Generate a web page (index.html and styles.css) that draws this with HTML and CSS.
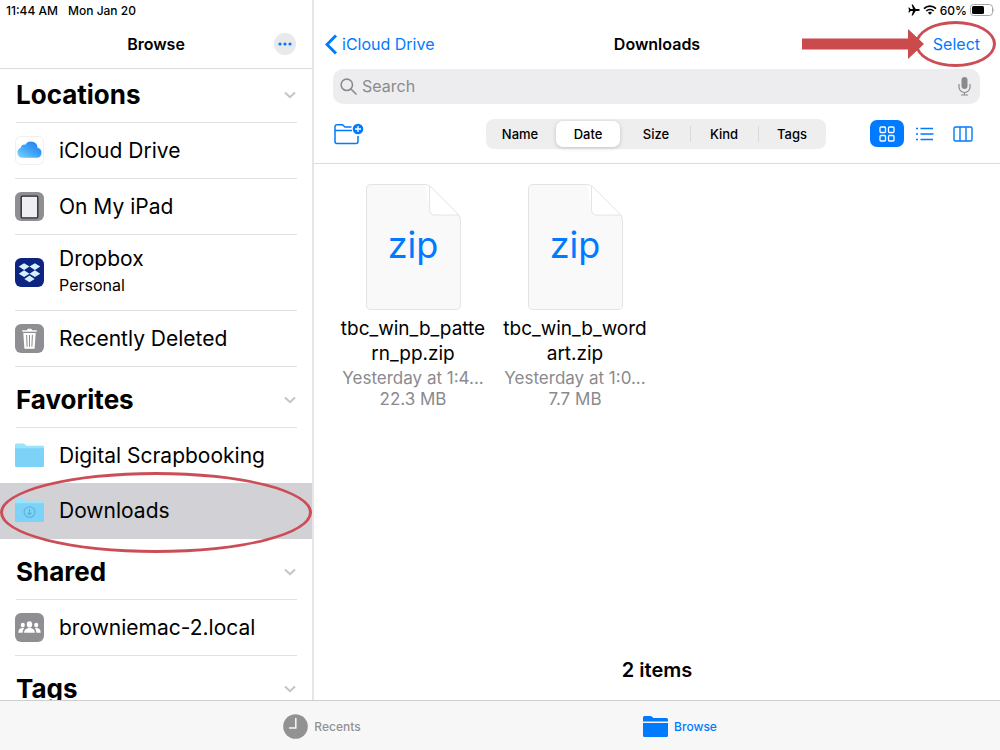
FILE: index.html
```html
<!DOCTYPE html>
<html lang="en">
    <head>
        <meta charset="utf-8">
        <title>Files</title>
        <link rel="stylesheet" href="styles.css">
    </head>

    <body>
        <div class="panes">
            <aside class="sidebar">
                <div class="status">
                    <span>11:44 AM</span>
                    <span>Mon Jan 20</span>
                </div>
                <header class="navbar sidebar-nav">
                    <h1 class="title">Browse</h1>
                    <button class="more" aria-label="More">
                        <svg width="16" height="4" viewBox="0 0 16 4"><circle cx="3" cy="2" r="1.6"/><circle cx="8" cy="2" r="1.6"/><circle cx="13" cy="2" r="1.6"/></svg>
                    </button>
                </header>

                <div class="lists">
                    <section>
                        <h2 class="heading">Locations <button class="fold" aria-label="Collapse Locations"><svg width="14" height="8" viewBox="0 0 14 8"><path d="M2 1.5l5 4.7 5-4.7"/></svg></button></h2>
                        <ul>
                            <li><a class="row" href="#">
                                <svg class="icon" viewBox="0 0 28 28">
                                    <defs><linearGradient id="cloud" x1="0" y1="1" x2="1" y2="0"><stop offset="0" stop-color="#7fd6fd"/><stop offset=".5" stop-color="#3ea2f7"/><stop offset="1" stop-color="#1c78ee"/></linearGradient></defs>
                                    <rect x=".5" y=".5" width="27" height="27" rx="5" fill="#fff" stroke="#f0f0f0"/>
                                    <path fill="url(#cloud)" d="M7 21a5 5 0 0 1-1.5-9.6 4 4 0 0 1 4.5-3 6.4 6.4 0 0 1 11.8 3A4.9 4.9 0 0 1 21.500 21z"/>
                                </svg>
                                <span>iCloud Drive</span></a></li>
                            <li><a class="row" href="#">
                                <svg class="icon" viewBox="0 0 28 28">
                                    <rect width="28" height="28" rx="6" fill="#8e8e93"/>
                                    <rect x="6" y="4" width="16" height="21" rx="1" fill="#eeeef3" stroke="#2b2b2e" stroke-width="1.3"/>
                                </svg>
                                <span>On My iPad</span></a></li>
                            <li><a class="row tall" href="#">
                                <svg class="icon" viewBox="0 0 28 28">
                                    <rect width="28" height="28" rx="6" fill="#0d2481"/>
                                    <path fill="#d3f2fd" d="M8.8 5l5.2 3.3-5.2 3.3-5.2-3.3zM19.2 5l5.2 3.3-5.2 3.3L14 8.3zM8.8 11.8l5.2 3.3-5.2 3.3-5.2-3.3zM19.2 11.8l5.2 3.3-5.2 3.3-5.2-3.3zM14 17l5 3.2-5 3.3-5-3.3z"/>
                                </svg>
                                <span>Dropbox<small>Personal</small></span></a></li>
                            <li><a class="row" href="#">
                                <svg class="icon" viewBox="0 0 28 28">
                                    <rect width="28" height="28" rx="6" fill="#8e8e93"/>
                                    <path fill="#fff" d="M7 6h4.5l.8-1.5h3.4l.8 1.5H21v1.6H7zM8 8.6h12L18.9 24H9.1z"/>
                                    <path fill="none" stroke="#8e8e93" d="M11.2 10.5l.5 11.5M14 10.5V22M16.8 10.5l-.5 11.5"/>
                                </svg>
                                <span>Recently Deleted</span></a></li>
                        </ul>
                    </section>
                    <section>
                        <h2 class="heading">Favorites <button class="fold" aria-label="Collapse Favorites"><svg width="14" height="8" viewBox="0 0 14 8"><path d="M2 1.5l5 4.7 5-4.7"/></svg></button></h2>
                        <ul>
                            <li><a class="row" href="#">
                                <svg class="icon" viewBox="0 0 28 28">
                                    <path fill="#9be2fb" d="M0 3.5q0-1 1-1h7.5l2.5 2h16q1 0 1 1V8H0z"/>
                                    <path fill="#7dd2f7" d="M0 7h28v17q0 1-1 1H1q-1 0-1-1z"/>
                                </svg>
                                <span>Digital Scrapbooking</span></a></li>
                            <li class="selected"><a class="row" href="#">
                                <svg class="icon" viewBox="0 0 28 28">
                                    <path fill="#9be2fb" d="M0 3.5q0-1 1-1h7.5l2.5 2h16q1 0 1 1V8H0z"/>
                                    <path fill="#7dd2f7" d="M0 7h28v17q0 1-1 1H1q-1 0-1-1z"/>
                                    <g fill="none" stroke="#56b0da"><circle cx="14" cy="15.5" r="5.2"/><path d="M14 12.5v5.5M12 16l2 2 2-2"/></g>
                                </svg>
                                <span>Downloads</span></a>
                                <i class="ring ring-row"></i></li>
                        </ul>
                    </section>
                    <section>
                        <h2 class="heading">Shared <button class="fold" aria-label="Collapse Shared"><svg width="14" height="8" viewBox="0 0 14 8"><path d="M2 1.5l5 4.7 5-4.7"/></svg></button></h2>
                        <ul>
                            <li><a class="row" href="#">
                                <svg class="icon" viewBox="0 0 28 28">
                                    <rect width="28" height="28" rx="6" fill="#8e8e93"/>
                                    <g fill="#fff"><ellipse cx="14" cy="11" rx="2.6" ry="3"/><path d="M8.8 19c0-6 10.4-6 10.4 0z"/>
                                    <ellipse cx="7.5" cy="11.7" rx="2" ry="2.4"/><path d="M3.2 19c0-4 2.8-5 5.6-4.2-1 1.2-1.300 2.500-1.4 4.2z"/>
                                    <ellipse cx="20.5" cy="11.7" rx="2" ry="2.4"/><path d="M24.8 19c0-4-2.8-5-5.6-4.2 1 1.2 1.300 2.500 1.4 4.2z"/></g>
                                </svg>
                                <span>browniemac-2.local</span></a></li>
                        </ul>
                    </section>
                    <section>
                        <h2 class="heading">Tags <button class="fold" aria-label="Collapse Tags"><svg width="14" height="8" viewBox="0 0 14 8"><path d="M2 1.5l5 4.7 5-4.7"/></svg></button></h2>
                    </section>
                </div>
            </aside>

            <main class="main">
                <div class="status status-right">
                    <svg width="12" height="12" viewBox="0 0 12 12"><path d="M11.8 6c0 .6-.8.9-1.6.9H7.7L4.8 11.5H3.6L5 6.9H2.5L1.3 8.4H.4L1 6 .4 3.6h.9l1.2 1.5H5L3.6.5h1.2l2.9 4.6h2.5c.8 0 1.6.3 1.6.9z"/></svg>
                    <svg width="14" height="10" viewBox="0 0 14 10"><g fill="none" stroke="#000" stroke-width="1.7"><path d="M1 3.7a8.500 8.500 0 0 1 12 0M3.3 6a5.300 5.300 0 0 1 7.4 0"/></g><path d="M4.9 7.7a3 3 0 0 1 4.2 0L7 9.8z"/></svg>
                    <span>60%</span>
                    <svg width="25" height="12" viewBox="0 0 25 12"><rect x=".5" y=".5" width="22" height="11" rx="3" fill="#fff" stroke="#a5a5a5"/><rect x="2" y="2" width="12" height="8" rx="1.5"/><path fill="#a5a5a5" d="M23.5 4q1.5 2 0 4z"/></svg>
                </div>
                <header class="navbar">
                    <a class="back" href="#"><svg width="13" height="21" viewBox="0 0 13 21"><path d="M11 1.5l-9 9 9 9"/></svg>iCloud Drive</a>
                    <h1 class="title">Downloads</h1>
                    <div class="select">
                        <i class="ring ring-select"></i>
                        <svg class="arrow" width="122" height="30" viewBox="0 0 122 30"><path d="M0 9.5h106V0l16 15-16 15V20.5H0z"/></svg>
                        <button class="link">Select</button>
                    </div>
                </header>

                <div class="search">
                    <svg width="17" height="17" viewBox="0 0 17 17"><g fill="none" stroke="#8a8a8e" stroke-width="1.6"><circle cx="6.8" cy="6.8" r="5.7"/><path d="M11 11l5 5" stroke-linecap="round"/></g></svg>
                    <input type="search" placeholder="Search" aria-label="Search">
                    <button class="plain" aria-label="Dictate"><svg width="13" height="19" viewBox="0 0 13 19"><rect x="3.5" y="0" width="6" height="12" rx="3" fill="#8a8a8e"/><path fill="none" stroke="#8a8a8e" stroke-width="1.2" d="M1 7v3a5.5 5.5 0 0 0 11 0V7M6.5 15.5V18M3 18h7"/></svg></button>
                </div>

                <div class="toolbar">
                    <button class="plain" aria-label="New Folder">
                        <svg width="30" height="22" viewBox="0 0 30 22">
                            <path fill="none" stroke="#007aff" stroke-width="1.5" d="M17.5 4H11L8.5 1.7H3.2Q1 1.7 1 4v14.5q0 2 2 2h19q2 0 2-2V13M1 7.5h17"/>
                            <circle cx="24" cy="6" r="5.3" fill="#007aff"/>
                            <path stroke="#fff" stroke-width="1.3" d="M24 3v6M21 6h6"/>
                        </svg>
                    </button>
                    <div class="segments">
                        <button>Name</button>
                        <button class="on">Date</button>
                        <button>Size</button>
                        <button class="divided">Kind</button>
                        <button class="divided">Tags</button>
                    </div>
                    <div class="views">
                        <button class="plain on" aria-label="Icons"><svg width="16" height="16" viewBox="0 0 16 16"><g fill="none" stroke="#fff" stroke-width="1.3"><rect x="1" y="1" width="5.5" height="5.5" rx="1"/><rect x="9.5" y="1" width="5.5" height="5.5" rx="1"/><rect x="1" y="9.5" width="5.5" height="5.5" rx="1"/><rect x="9.5" y="9.5" width="5.5" height="5.5" rx="1"/></g></svg></button>
                        <button class="plain" aria-label="List"><svg width="18" height="14" viewBox="0 0 18 14"><path fill="none" stroke="#007aff" stroke-width="1.5" d="M0 1.5h2M4.5 1.5H17M0 7h2M4.5 7H17.5M0 12.5h2M4.5 12.5H17"/></svg></button>
                        <button class="plain" aria-label="Columns"><svg width="20" height="16" viewBox="0 0 20 16"><path fill="none" stroke="#007aff" stroke-width="1.4" d="M7 1v14M13 1v14M2.5 1h15Q19 1 19 2.5v11q0 1.5-1.5 1.5h-15Q1 15 1 13.5v-11Q1 1 2.5 1z"/></svg></button>
                    </div>
                </div>

                <div class="files">
                    <div class="file">
                        <div class="doc">
                            <svg width="95" height="126" viewBox="0 0 95 126"><path fill="#f9f9f9" d="M5 .5h58L94.5 32v89q0 4.5-4.5 4.5H5Q.5 125.5.5 121V5Q.5.5 5 .5z"/><path fill="#fff" d="M59 .5h5L94.5 31H69q-5.5 0-5.5-5.5z"/><path fill="none" stroke="#e4e4e5" d="M94.5 37v84q0 4.5-4.5 4.5H5Q.5 125.5.5 121V5Q.5.5 5 .5h54q3.5 0 6 2.5L91.5 29.5q3 3 3 7.5M63.5 2v23.5q0 5.5 5.5 5.5h23.5"/></svg>
                            <span class="ext">zip</span>
                        </div>
                        <div class="name">tbc_win_b_patte<br>rn_pp.zip</div>
                        <div class="meta">Yesterday at 1:4...<br>22.3 MB</div>
                    </div>
                    <div class="file">
                        <div class="doc">
                            <svg width="95" height="126" viewBox="0 0 95 126"><path fill="#f9f9f9" d="M5 .5h58L94.5 32v89q0 4.5-4.5 4.5H5Q.5 125.5.5 121V5Q.5.5 5 .5z"/><path fill="#fff" d="M59 .5h5L94.5 31H69q-5.5 0-5.5-5.5z"/><path fill="none" stroke="#e4e4e5" d="M94.5 37v84q0 4.5-4.5 4.5H5Q.5 125.5.5 121V5Q.5.5 5 .5h54q3.5 0 6 2.5L91.5 29.5q3 3 3 7.5M63.5 2v23.5q0 5.5 5.5 5.5h23.5"/></svg>
                            <span class="ext">zip</span>
                        </div>
                        <div class="name">tbc_win_b_word<br>art.zip</div>
                        <div class="meta">Yesterday at 1:0...<br>7.7 MB</div>
                    </div>
                </div>
                <p class="count">2 items</p>
            </main>
        </div>

        <nav class="tabbar">
            <a class="tab" href="#"><svg width="25" height="25" viewBox="0 0 25 25"><circle cx="12.5" cy="12.5" r="12.3" fill="#929292"/><path fill="none" stroke="#f7f7f7" stroke-width="1.5" d="M12.8 4v10H6"/></svg>Recents</a>
            <a class="tab active" href="#"><svg width="25" height="21" viewBox="0 0 25 21"><path fill="#007aff" d="M0 5.5V1.5Q0 0 1.5 0h6q1 0 1.5.7L10.500 2h13Q25 2 25 3.5v2zM0 7h25v12.500q0 1.500-1.500 1.500h-22Q0 21 0 19.500z"/></svg>Browse</a>
        </nav>
    </body>
</html>
```

FILE: styles.css
```css
* {
    box-sizing: border-box;
}

body {
    margin: 0;
    height: 100vh;
    display: flex;
    flex-direction: column;
    background: #fff;
    color: #000;
    font-family: Inter, "Liberation Sans", sans-serif;
    font-size: 16px;
}

h1, h2, p, ul {
    margin: 0;
    padding: 0;
}

ul {
    list-style: none;
}

a {
    color: inherit;
    text-decoration: none;
}

button {
    font: inherit;
    color: inherit;
    border: none;
    background: none;
    padding: 0;
    cursor: pointer;
}

svg {
    display: block;
    flex: none;
}

.panes {
    flex: 1;
    min-height: 0;
    display: flex;
}

.status {
    height: 20px;
    flex: none;
    display: flex;
    align-items: center;
    gap: 10px;
    padding: 0 6px;
    font-size: 12px;
    font-weight: 500;
}

.status-right {
    justify-content: flex-end;
    gap: 3px;
    padding-right: 5px;
}

.navbar {
    height: 48px;
    flex: none;
    display: grid;
    grid-template-columns: 1fr auto 1fr;
    align-items: center;
    padding: 0 20px;
}

.title {
    font-size: 16px;
    font-weight: 600;
}

/* sidebar */

.sidebar {
    width: 314px;
    flex: none;
    display: flex;
    flex-direction: column;
    border-right: 2px solid #e5e5e7;
}

.sidebar-nav {
    height: 49px;
    padding: 0 16px;
    border-bottom: 1px solid #dcdcdd;
}

.sidebar-nav .title {
    grid-column: 2;
}

.more {
    justify-self: end;
    width: 22px;
    height: 22px;
    border-radius: 50%;
    background: #e9e9eb;
    display: grid;
    place-items: center;
}

.more svg {
    fill: #007aff;
}

.lists {
    flex: 1;
    min-height: 0;
    overflow: hidden;
}

.heading {
    display: flex;
    align-items: center;
    justify-content: space-between;
    height: 54px;
    margin: 0 15px 0 16px;
    padding-bottom: 2px;
    border-bottom: 1px solid #e2e2e4;
    font-size: 26px;
    font-weight: 700;
}

section + section .heading {
    margin-top: 7px;
}

.fold svg {
    fill: none;
    stroke: #c4c4c7;
    stroke-width: 2;
}

.row {
    display: flex;
    align-items: center;
    gap: 15px;
    height: 56px;
    margin: 0 15px;
    border-bottom: 1px solid #e2e2e4;
    font-size: 21px;
}

.row.tall {
    height: 76px;
}

.row small {
    display: block;
    font-size: 16px;
    line-height: 28px;
}

.icon {
    width: 29px;
    height: 29px;
}

.selected {
    position: relative;
    margin-top: -1px;
    background: #d1d1d6;
}

.selected .row {
    border-color: transparent;
}

/* red markup */

.ring {
    position: absolute;
    border: 3px solid #cb4e57;
    border-radius: 50%;
    pointer-events: none;
}

.ring-row {
    inset: -11px 0 -14px;
}

.ring-select {
    inset: -13px -16px -13px -18px;
}

.arrow {
    position: absolute;
    right: 56px;
    fill: #cb4a4c;
}

/* file browser */

.main {
    flex: 1;
    min-width: 0;
    display: flex;
    flex-direction: column;
}

.back {
    display: flex;
    align-items: center;
    gap: 4px;
    margin-left: -9px;
    color: #007aff;
}

.back svg {
    fill: none;
    stroke: #007aff;
    stroke-width: 3;
}

.select {
    position: relative;
    justify-self: end;
    display: flex;
    align-items: center;
}

.link {
    color: #007aff;
}

.search {
    display: flex;
    align-items: center;
    gap: 5px;
    height: 35px;
    flex: none;
    margin: 1px 20px 0 19px;
    padding: 0 9px 0 7px;
    border-radius: 10px;
    background: #ededef;
}

.search input {
    flex: 1;
    min-width: 0;
    padding: 0 0 2px;
    border: none;
    outline: none;
    background: none;
    font: inherit;
}

.search input::placeholder {
    color: #8a8a8e;
}

.toolbar {
    display: grid;
    grid-template-columns: 1fr auto 1fr;
    align-items: center;
    height: 60px;
    flex: none;
    padding: 0 22px 0 20px;
    border-bottom: 1px solid #dcdcdd;
}

.plain {
    display: grid;
    place-items: center;
    justify-self: start;
}

.segments {
    display: flex;
    height: 30px;
    padding: 2px 0;
    border-radius: 8px;
    background: #eeeeef;
    font-size: 13px;
    font-weight: 500;
}

.segments button {
    width: 64px;
    margin: 0 2px;
    border-radius: 7px;
    position: relative;
}

.segments .on {
    background: #fff;
    box-shadow: 0 1px 4px rgba(0, 0, 0, .18);
}

.segments .divided::before {
    content: "";
    position: absolute;
    left: -2px;
    top: 5px;
    height: 16px;
    border-left: 1px solid #dadadc;
}

.views {
    display: flex;
    align-items: center;
    justify-content: flex-end;
    gap: 4px;
}

.views .plain {
    width: 34px;
    height: 27px;
    border-radius: 7px;
}

.views .plain:last-child {
    margin-right: -2px;
}

.views .on {
    background: #007aff;
}

.files {
    display: flex;
    flex-wrap: wrap;
    gap: 14px;
    padding: 20px 25px;
}

.file {
    width: 148px;
    text-align: center;
    white-space: nowrap;
}

.doc {
    display: grid;
    place-items: center;
    margin-bottom: 6px;
}

.doc > * {
    grid-area: 1 / 1;
}

.ext {
    padding-bottom: 4px;
    color: #007aff;
    font-size: 36px;
}

.name {
    font-size: 19px;
    line-height: 25px;
}

.meta {
    margin-top: 2px;
    color: #8a8a8e;
    font-size: 17px;
    line-height: 21px;
}

.count {
    margin-top: auto;
    padding-bottom: 18px;
    text-align: center;
    font-size: 20px;
    font-weight: 600;
}

/* bottom tabs */

.tabbar {
    display: flex;
    justify-content: center;
    height: 50px;
    flex: none;
    padding: 2px 0 0 2px;
    border-top: 1px solid #cfcfd0;
    background: #f7f7f7;
}

.tab {
    width: 358px;
    display: flex;
    align-items: center;
    justify-content: center;
    gap: 6px;
    color: #929292;
    font-size: 12px;
    font-weight: 500;
}

.tab.active {
    color: #007aff;
}
```
